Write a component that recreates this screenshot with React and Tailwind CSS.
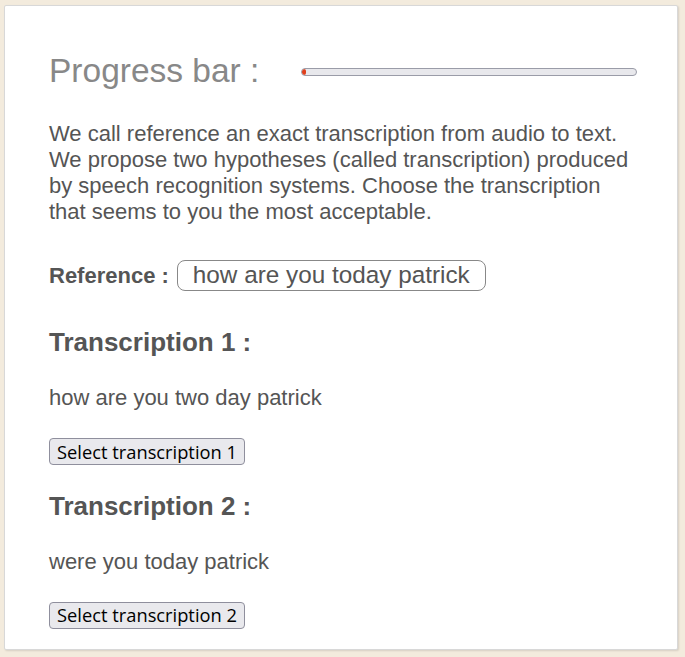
export default function App() {
    const progress = 1;

    return (
        <div className="w-[685px] h-[657px] bg-[#f3ebdd] pl-[4px] pt-[5px] font-['Liberation_Sans',Arial,sans-serif]">
            <div className="h-[645px] w-[674px] bg-white border border-[#d8d8d8] rounded-[2px] shadow-[1px_1px_2px_rgba(0,0,0,0.12)] pl-[44px] pr-[40px] pt-[45px] text-[#555]">
                <div className="flex items-center h-[40px]">
                    <h1 className="text-[33.5px] leading-[40px] text-[#888] whitespace-nowrap">Progress bar :</h1>
                    <div className="ml-[42px] w-[336px] shrink-0 h-[8px] rounded-full border border-[#9a9ca8] bg-[#e8e8ec] overflow-hidden mt-[1px]">
                        <div className="h-full bg-[#e0401c] rounded-full" style={{ width: `${progress}%` }} />
                    </div>
                </div>

                <p className="mt-[30px] text-[22px] leading-[26px]">
                    We call reference an exact transcription from audio to text. We propose two hypotheses (called
                    transcription) produced by speech recognition systems. Choose the transcription that seems to you
                    the most acceptable.
                </p>

                <div className="mt-[34px] flex items-center">
                    <span className="text-[22px] font-bold">Reference :</span>
                    <span className="ml-[8px] border border-[#888] rounded-[8px] pl-[15px] pr-[15px] h-[31px] flex items-center text-[24.3px]">
                        how are you today patrick
                    </span>
                </div>

                {[
                    { n: 1, text: 'how are you two day patrick' },
                    { n: 2, text: 'were you today patrick' },
                ].map((t, i) => (
                    <div key={t.n} className={i === 0 ? 'mt-[34px]' : 'mt-[24px]'}>
                        <h2 className="text-[26px] font-bold leading-[32px]">Transcription {t.n} :</h2>
                        <p className="mt-[27px] text-[22px] leading-[26px]">{t.text}</p>
                        <button className="mt-[27px] h-[27px] w-[196px] bg-[#e9e9ed] border border-[#8f8f9d] rounded-[4px] text-[18.3px] leading-[20px] font-medium text-black font-['Open_Sans',sans-serif]">
                            Select transcription {t.n}
                        </button>
                    </div>
                ))}
            </div>
        </div>
    );
}
